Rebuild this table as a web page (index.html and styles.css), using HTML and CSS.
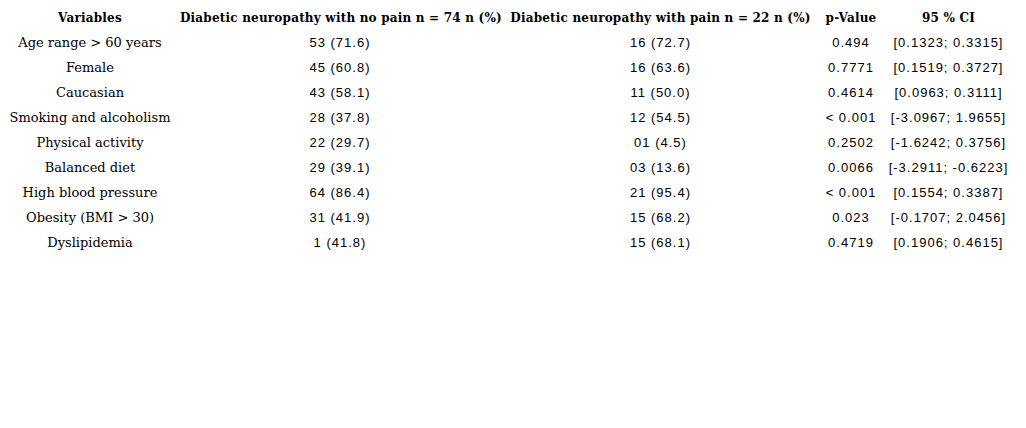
FILE: index.html
```html
<!DOCTYPE html>
<html lang="en">
<head>
  <meta charset="UTF-8">
  <meta name="viewport" content="width=device-width, initial-scale=1.0">
  <title>Diabetic neuropathy risk factors</title>
  <link rel="stylesheet" href="styles.css">
</head>
<body>
  <table class="results">
    <colgroup>
      <col class="col-var">
      <col class="col-no">
      <col class="col-pain">
      <col class="col-p">
      <col class="col-ci">
    </colgroup>
    <thead>
      <tr>
        <th>Variables</th>
        <th>Diabetic neuropathy with no pain n = 74 n (%)</th>
        <th>Diabetic neuropathy with pain n = 22 n (%)</th>
        <th>p-Value</th>
        <th>95 % CI</th>
      </tr>
    </thead>
    <tbody>
      <tr><td class="label">Age range &gt; 60 years</td><td>53 (71.6)</td><td>16 (72.7)</td><td>0.494</td><td>[0.1323; 0.3315]</td></tr>
      <tr><td class="label">Female</td><td>45 (60.8)</td><td>16 (63.6)</td><td>0.7771</td><td>[0.1519; 0.3727]</td></tr>
      <tr><td class="label">Caucasian</td><td>43 (58.1)</td><td>11 (50.0)</td><td>0.4614</td><td>[0.0963; 0.3111]</td></tr>
      <tr><td class="label">Smoking and alcoholism</td><td>28 (37.8)</td><td>12 (54.5)</td><td>&lt; 0.001</td><td>[-3.0967; 1.9655]</td></tr>
      <tr><td class="label">Physical activity</td><td>22 (29.7)</td><td>01 (4.5)</td><td>0.2502</td><td>[-1.6242; 0.3756]</td></tr>
      <tr><td class="label">Balanced diet</td><td>29 (39.1)</td><td>03 (13.6)</td><td>0.0066</td><td>[-3.2911; -0.6223]</td></tr>
      <tr><td class="label">High blood pressure</td><td>64 (86.4)</td><td>21 (95.4)</td><td>&lt; 0.001</td><td>[0.1554; 0.3387]</td></tr>
      <tr><td class="label">Obesity (BMI &gt; 30)</td><td>31 (41.9)</td><td>15 (68.2)</td><td>0.023</td><td>[-0.1707; 2.0456]</td></tr>
      <tr><td class="label">Dyslipidemia</td><td>1 (41.8)</td><td>15 (68.1)</td><td>0.4719</td><td>[0.1906; 0.4615]</td></tr>
    </tbody>
  </table>
</body>
</html>
```

FILE: styles.css
```css
body {
  margin: 5px 0 0 0;
  background: #fff;
  color: #000;
  font-family: "Liberation Sans", Arial, sans-serif;
  font-size: 13px;
}
.results {
  border-collapse: collapse;
  table-layout: fixed;
  width: 1016px;
}
.results th, .results td {
  height: 25px;
  padding: 0;
  text-align: center;
  white-space: nowrap;
  letter-spacing: 1px;
}
.results th {
  font-family: "DejaVu Serif", serif;
  font-weight: bold;
  font-size: 12px;
  letter-spacing: 0.2px;
}
.results td.label {
  font-family: "DejaVu Serif", serif;
  font-size: 13px;
  letter-spacing: 0;
}
.col-var { width: 180px; }
.col-no { width: 320px; }
.col-pain { width: 321px; }
.col-p { width: 60px; }
.col-ci { width: 135px; }
```
